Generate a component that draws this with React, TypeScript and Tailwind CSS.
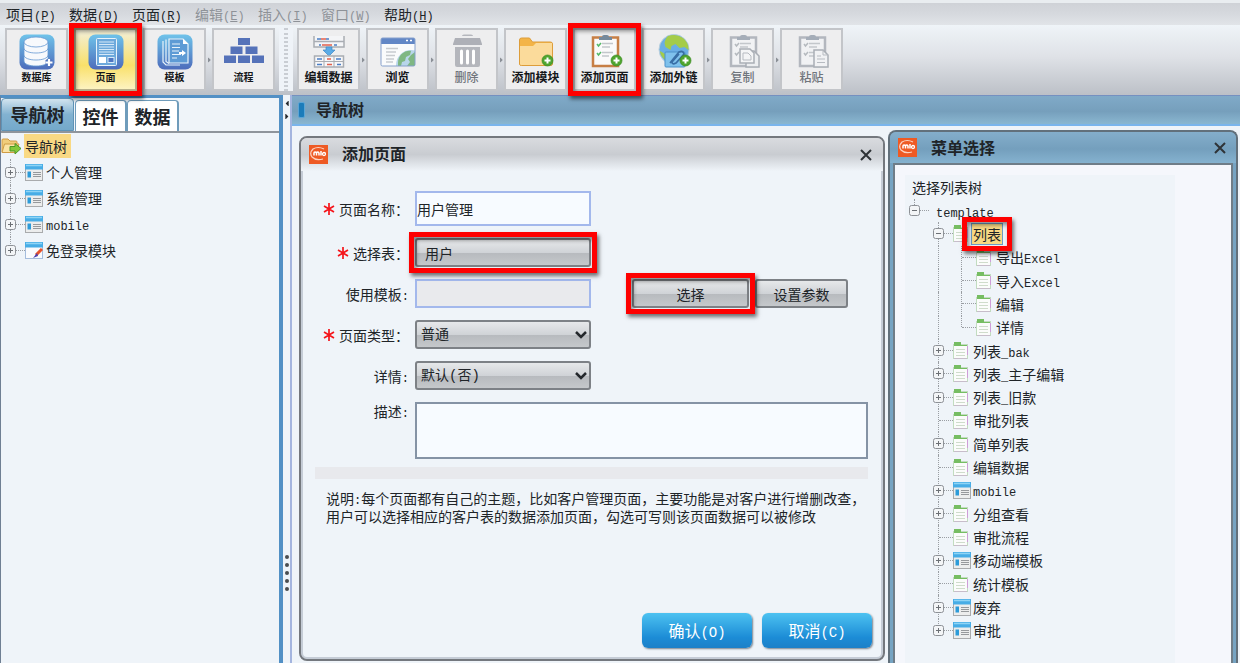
import { Fragment } from "react";
import type { ReactNode } from "react";
import { FaCaretLeft, FaCaretRight } from "react-icons/fa";

const cjk = "font-['Noto_Sans_CJK_SC',sans-serif]";

// Latin runs use a narrower mono face than the Chinese text
function Mixed({ text, latin = "text-[12px]" }: { text: string; latin?: string }) {
    return (
        <>
            {text.split(/([\x21-\x7e]+)/).map((part, i) =>
                i % 2 ? (
                    <span key={i} className={`font-['Liberation_Mono',monospace] leading-none ${latin}`}>{part}</span>
                ) : (
                    <Fragment key={i}>{part}</Fragment>
                )
            )}
        </>
    );
}

function RedFrame({ inset = "-inset-[5px]" }: { inset?: string }) {
    return (
        <span
            className={`absolute ${inset} z-10 border-[5px] border-[#fe0000] pointer-events-none shadow-[2px_3px_4px_rgba(0,0,0,0.55),inset_2px_3px_4px_rgba(0,0,0,0.45)]`}
        />
    );
}

/* ---------- toolbar icons ---------- */

function BlueTile({ children }: { children: ReactNode }) {
    return (
        <svg viewBox="0 0 36 36" className="w-9 h-9">
            <defs>
                <linearGradient id="tile" x1="0" y1="0" x2="0" y2="1">
                    <stop offset="0" stopColor="#6fc3ea" />
                    <stop offset="1" stopColor="#4d6cbb" />
                </linearGradient>
            </defs>
            <rect x="0.5" y="0.5" width="35" height="35" rx="7" fill="url(#tile)" />
            {children}
        </svg>
    );
}

function DatabaseIcon() {
    return (
        <BlueTile>
            <g fill="#f7f9fc" stroke="#6397d2" strokeWidth="0.8">
                <path d="M5 22v5c0 3 5 5 12 5s12-2 12-5v-5z" />
                <path d="M5 15v6c0 3 5 5 12 5s12-2 12-5v-6z" />
                <path d="M5 8v6c0 3 5 5 12 5s12-2 12-5V8z" />
                <ellipse cx="17" cy="8" rx="12" ry="5" />
            </g>
            <path d="M30 25v7M26.500 28.500h7" stroke="#4f72be" strokeWidth="5" />
            <path d="M30 25v7M26.500 28.500h7" stroke="#fff" strokeWidth="2.200" />
        </BlueTile>
    );
}

function PageIcon() {
    return (
        <BlueTile>
            <rect x="8.500" y="4.500" width="20" height="27" rx="1" fill="#6da9dc" stroke="#e8f3fb" />
            <path d="M11 8h15M11 10.500h15M11 13h15M11 15.500h15M11 18h15M11 20.500h15" stroke="#d6e9f8" strokeWidth="1.200" />
            <rect x="11" y="23" width="7" height="6" fill="#fff" />
            <rect x="20" y="23.500" width="6" height="5" fill="#4f77c2" stroke="#d6e9f8" />
        </BlueTile>
    );
}

function TemplateIcon() {
    return (
        <BlueTile>
            <path d="M6 7v21l3 3h14" fill="none" stroke="#e8f3fb" strokeWidth="1.200" />
            <path d="M9 5.500v22l3 2" fill="none" stroke="#e8f3fb" strokeWidth="1.200" />
            <path d="M12 5h14l5 5v19H12z" fill="#5e9bd5" stroke="#e8f3fb" strokeWidth="1.200" />
            <path d="M26 5v5h5z" fill="#fff" />
            <path d="M15 10h8M15 13.500h8M15 17h7M15 20.500h9M15 24h5" stroke="#e8f3fb" strokeWidth="1.100" />
            <path d="M22 18h3v-2l4 3-4 3v-2h-3z" fill="#fff" />
        </BlueTile>
    );
}

function FlowIcon() {
    return (
        <svg viewBox="0 0 42 36" className="w-[42px] h-9" fill="#5572b9">
            <rect x="15" y="4" width="12" height="7" />
            <rect x="7.500" y="12.500" width="12" height="7.500" />
            <rect x="22.500" y="12.500" width="12" height="7.500" />
            <rect x="1" y="21.500" width="12" height="7.500" />
            <rect x="15" y="21.500" width="12" height="7.500" />
            <rect x="29" y="21.500" width="12" height="7.500" />
        </svg>
    );
}

function EditDataIcon() {
    return (
        <svg viewBox="0 0 36 36" className="w-9 h-9">
            <path d="M3 2v11h30V2M3 7.500h30" fill="#f4f5f7" stroke="#a9adb3" strokeWidth="1.500" />
            <path d="M6 5h4M15 5h3M8 11h2M23 11h3" stroke="#4b7fc6" strokeWidth="1.500" />
            <path d="M10 5h5M11 11h10" stroke="#e2604c" strokeWidth="1.500" />
            <path d="M15 13h6v3h3l-6 6-6-6h3z" fill="#5babe6" stroke="#3f87c5" strokeWidth="0.700" />
            <rect x="3.500" y="22" width="29" height="11" fill="#f7f7f9" stroke="#a9adb3" strokeWidth="1.500" />
            <path d="M3 27.500h30M13 22v11M23 22v11" stroke="#a9adb3" />
            <path d="M6 25h5M25 25h5M6 30.500h5M26 30.500h4" stroke="#4b7fc6" strokeWidth="1.500" />
            <path d="M16 25h4M16 30.500h5" stroke="#e2604c" strokeWidth="1.700" />
        </svg>
    );
}

function BrowseIcon() {
    return (
        <svg viewBox="0 0 36 36" className="w-9 h-9">
            <defs>
                <clipPath id="browse"><rect x="1" y="4" width="34" height="28" rx="1.500" /></clipPath>
            </defs>
            <g clipPath="url(#browse)">
                <rect x="1" y="4" width="34" height="28" fill="#fafbfc" />
                <rect x="1" y="4" width="34" height="6" fill="#6287c6" />
                <path d="M26 6.500h2M30 6.500h2" stroke="#fff" strokeWidth="1.500" />
                <path d="M6 14.500h12M6 18h10M6 21.500h9M6 25h8M6 28h7" stroke="#c8cbcf" strokeWidth="1.500" />
                <circle cx="31" cy="31" r="15" fill="#b8d6ea" />
                <path d="M18 29c0-8 7-13 13-12l-1 4-4 2-1 4-3 1-1 4h-3z" fill="#7fb783" />
                <path d="M31 21l4-3v14h-8l3-4-2-3z" fill="#7fb783" />
            </g>
            <rect x="1" y="4" width="34" height="28" rx="1.500" fill="none" stroke="#86a0cc" />
        </svg>
    );
}

function TrashIcon() {
    return (
        <svg viewBox="0 0 36 36" className="w-9 h-9">
            <path d="M13 2q0-1.500 2-1.500h7q2 0 2 1.500z" fill="#b5b7bd" />
            <path d="M6 4h25l2 6v1H4v-1z" fill="#aeb0b7" />
            <path d="M6 13h25v18q0 2-2 2H8q-2 0-2-2z" fill="#b4b6bc" />
            <path d="M12.500 17v12M18.500 17v12M24.500 17v12" stroke="#fff" strokeWidth="3" strokeLinecap="round" />
        </svg>
    );
}

function PlusBadge() {
    return (
        <g>
            <circle cx="29.500" cy="26.500" r="5.500" fill="#4fa52e" stroke="#3c8a22" strokeWidth="0.700" />
            <path d="M29.500 23.500v6M26.500 26.500h6" stroke="#fff" strokeWidth="2" />
        </g>
    );
}

function FolderIcon() {
    return (
        <svg viewBox="0 0 36 36" className="w-9 h-9">
            <path d="M1.500 30V6q0-2 2-2h8l3 4h18q2 0 2 2v20q0 1.500-2 1.500h-29q-2 0-2-1.500z" fill="#f3b447" stroke="#dd9d3a" />
            <path d="M2 12h13l3-3h16v21q0 1-1.500 1h-29Q2 31 2 30z" fill="#fbdb9b" />
            <PlusBadge />
        </svg>
    );
}

function Clipboard({ gray = false }: { gray?: boolean }) {
    return (
        <g>
            <rect x="6" y="3.500" width="25" height="28.500" fill={gray ? "#f1f2f4" : "#fafafa"} stroke={gray ? "#b3b7be" : "#c77f45"} strokeWidth="2.500" />
            <path d="M12 6V3h3q0-2 2-2h3q2 0 2 2h3v3z" fill={gray ? "#a5adb8" : "#76899b"} />
            <path d="M15 9.500h11M15 13h8M15 18.500h11M15 22h7" stroke="#c3c7cb" strokeWidth="1.500" />
            <path d="M10 10l1.500 2 2.500-3M10 19l1.500 2 2.500-3" fill="none" stroke={gray ? "#b5babf" : "#55ba68"} strokeWidth="1.500" />
        </g>
    );
}

function AddPageIcon() {
    return (
        <svg viewBox="0 0 36 36" className="w-9 h-9">
            <Clipboard />
            <PlusBadge />
        </svg>
    );
}

function GlobeIcon() {
    return (
        <svg viewBox="0 0 36 36" className="w-9 h-9">
            <circle cx="18" cy="15.500" r="15" fill="#6aaee5" stroke="#b9cfdd" />
            <path d="M12 2q8-3 15 2 6 5 5.500 12l-4-3-5 1-4-4-4 2-1 4-5-3-1-4q1-5 3.500-7z" fill="#a4cc49" />
            <path d="M4 17l5 3 2 7-3-2q-4-4-4-8z" fill="#a4cc49" />
            <rect x="9" y="18" width="20" height="15" rx="1" fill="#7fc1ec" stroke="#4d91c9" />
            <path d="M14 29l9-11q4-2 5 2l-8 9q-4 2-4-1l7-8" fill="none" stroke="#386ea5" strokeWidth="1.700" />
            <PlusBadge />
        </svg>
    );
}

function CopyIcon() {
    return (
        <svg viewBox="0 0 36 36" className="w-9 h-9">
            <Clipboard gray />
            <path d="M21 17h8l5 5v11H21z" fill="#eceef0" stroke="#a9aeb5" strokeWidth="1.500" />
            <path d="M15 15h10l4 4v10H15z" fill="#f4f5f6" stroke="#a9aeb5" strokeWidth="1.500" />
            <path d="M18 19h5l3 3v4h-8z" fill="none" stroke="#b7bbc1" />
        </svg>
    );
}

function PasteIcon() {
    return (
        <svg viewBox="0 0 36 36" className="w-9 h-9">
            <Clipboard gray />
            <path d="M20 16h9l5 5v12H20z" fill="#f1f2f4" stroke="#a9aeb5" strokeWidth="1.500" />
            <path d="M29 16v5h5M23 22h4M23 25h8M23 28.500h8" fill="none" stroke="#b7bbc1" />
        </svg>
    );
}

/* ---------- tree icons ---------- */

function WindowIcon() {
    return (
        <svg viewBox="0 0 18 17" className="w-[18px] h-[17px] shrink-0">
            <rect x="0.500" y="0.500" width="17" height="16" fill="#eceded" stroke="#a9abad" />
            <rect width="18" height="5.500" fill="#48ade6" />
            <path d="M1 1.500h16" stroke="#8fd4f5" strokeWidth="1.500" />
            <rect x="2.500" y="7.500" width="3.500" height="6" fill="#2c9bd9" />
            <path d="M8 8.500h8M8 10.500h8M8 12.500h8" stroke="#96999c" />
        </svg>
    );
}

function WindowPenIcon() {
    return (
        <svg viewBox="0 0 18 17" className="w-[18px] h-[17px] shrink-0">
            <rect x="0.500" y="0.500" width="17" height="16" fill="#fafbfd" stroke="#a5bddd" />
            <rect width="18" height="5.500" fill="#48ade6" />
            <path d="M1 1.500h16" stroke="#8fd4f5" strokeWidth="1.500" />
            <path d="M17 7l-6 6" stroke="#e8532b" strokeWidth="3" />
            <path d="M12 11l-4 5 5-2z" fill="#4b3fae" />
        </svg>
    );
}

function SheetIcon() {
    return (
        <span className="w-[18px] shrink-0">
            <svg viewBox="0 0 15 17" className="block w-[15px] h-[17px]">
                <rect x="0.500" y="2.500" width="14" height="14" fill="#fbfcfb" stroke="#c2dcc0" />
                <path d="M14.500 4v9" stroke="#cf9ed8" />
                <path d="M1 0h7v3h6v1H1z" fill="#76bd62" />
                <path d="M3 7.500h9M3 10.500h9M3 13.500h9" stroke="#cfdccb" />
                <path d="M1 16.500h13" stroke="#c7bdca" />
            </svg>
        </span>
    );
}

function FolderGoIcon() {
    return (
        <svg viewBox="0 0 20 18" className="w-5 h-[18px] shrink-0">
            <path d="M1 15V3q0-1 1-1h5l2 2h6q1 0 1 1v3" fill="#f0cd7c" stroke="#cf9c45" />
            <path d="M1 15.500L3.500 7H18l-3 8.500z" fill="#fae3a5" stroke="#cf9c45" />
            <path d="M9 9.500h5V6.500l6 5-6 5.500v-3H9z" fill="#84c83b" stroke="#4c9726" />
        </svg>
    );
}

function MioLogo() {
    return (
        <svg viewBox="0 0 19 19" className="w-[19px] h-[19px]">
            <rect width="19" height="19" fill="#ee5a24" />
            <path d="M15 4Q9 1 4 4 0 8 3 12q4 4 11 2" fill="none" stroke="#fbd3c2" strokeWidth="1.200" />
            <path d="M5 10.500V8q0-1 1-1t1.500 1v2.500V8q0-1 1-1t1.500 1v2.500M12 6v4.500" fill="none" stroke="#fff" strokeWidth="1.500" />
            <circle cx="15" cy="9" r="1.500" fill="none" stroke="#fff" strokeWidth="1.300" />
        </svg>
    );
}

/* ---------- menu and toolbar ---------- */

const menus = [
    { text: "项目", hot: "P" },
    { text: "数据", hot: "D" },
    { text: "页面", hot: "R" },
    { text: "编辑", hot: "E", off: true },
    { text: "插入", hot: "I", off: true },
    { text: "窗口", hot: "W", off: true },
    { text: "帮助", hot: "H" },
];

type Tool = { text: string; icon: ReactNode; active?: boolean; framed?: boolean; off?: boolean };

const viewTools: Tool[] = [
    { text: "数据库", icon: <DatabaseIcon /> },
    { text: "页面", icon: <PageIcon />, active: true, framed: true },
    { text: "模板", icon: <TemplateIcon /> },
    { text: "流程", icon: <FlowIcon /> },
];

const actionTools: Tool[] = [
    { text: "编辑数据", icon: <EditDataIcon /> },
    { text: "浏览", icon: <BrowseIcon /> },
    { text: "删除", icon: <TrashIcon />, off: true },
    { text: "添加模块", icon: <FolderIcon /> },
    { text: "添加页面", icon: <AddPageIcon />, framed: true },
    { text: "添加外链", icon: <GlobeIcon /> },
    { text: "复制", icon: <CopyIcon />, off: true },
    { text: "粘贴", icon: <PasteIcon />, off: true },
];

function ToolGroup({ tools, label }: { tools: Tool[]; label: string }) {
    return (
        <div className="flex">
            {tools.map((t, i) => (
                <Fragment key={t.text}>
                    {i > 0 && (
                        <span className="w-[6px] h-[63px] flex items-center justify-center text-[#8b9097]">
                            <FaCaretRight className="w-[5px] h-2" />
                        </span>
                    )}
                    <button
                        disabled={t.off}
                        className={`relative flex flex-col items-center w-[63px] h-[63px] pt-1 border-2 ${
                            t.active
                                ? "border-[#b9b08a] bg-[linear-gradient(#f3efd8,#f9e06a_60%,#fdf3c0)]"
                                : "border-[#c3c5c9] bg-[#eeeeef]"
                        }`}
                    >
                        {t.icon}
                        <span className={`${label} leading-[14px] whitespace-nowrap ${t.off ? "text-[#70757c] font-medium" : "text-[#15171a] font-bold"}`}>
                            {t.text}
                        </span>
                        {t.framed && <RedFrame inset="-inset-[7px]" />}
                    </button>
                </Fragment>
            ))}
        </div>
    );
}

/* ---------- trees ---------- */

function Toggle({ open }: { open?: boolean }) {
    return (
        <button aria-label={open ? "收起" : "展开"} className="relative w-[11px] h-[11px] shrink-0">
            <svg viewBox="0 0 11 11" className="w-[11px] h-[11px]">
                <rect x="0.500" y="0.500" width="10" height="10" rx="2" fill="#f3f5f7" stroke="#8d9196" />
                <path d={open ? "M3 5.500h5" : "M3 5.500h5M5.500 3v5"} stroke="#6c7075" />
            </svg>
        </button>
    );
}

// Dotted guide, optionally with the expand box, then a short line to the icon
function Branch({ toggle, last, first }: { toggle?: "open" | "closed"; last?: boolean; first?: boolean }) {
    return (
        <span className="flex items-center self-stretch shrink-0">
            <span className="relative flex items-center justify-center w-[11px] self-stretch">
                <span className={`absolute left-[5px] top-0 border-l border-dotted border-[#9a9ea3] ${last || first ? "bottom-1/2" : "bottom-0"}`} />
                {toggle && <Toggle open={toggle === "open"} />}
            </span>
            <span className={`border-t border-dotted border-[#9a9ea3] ${toggle ? "w-[9px]" : "w-[14px] -ml-[5px]"}`} />
        </span>
    );
}

const navNodes = [
    { text: "个人管理", icon: <WindowIcon /> },
    { text: "系统管理", icon: <WindowIcon /> },
    { text: "mobile", icon: <WindowIcon /> },
    { text: "免登录模块", icon: <WindowPenIcon /> },
];

type Node = { text: string; level: number; kind?: "sheet" | "window"; toggle?: "open" | "closed"; last?: boolean; picked?: boolean };

const templateNodes: Node[] = [
    { text: "template", level: 0, toggle: "open" },
    { text: "列表", level: 1, kind: "sheet", toggle: "open", picked: true },
    { text: "导出Excel", level: 2, kind: "sheet" },
    { text: "导入Excel", level: 2, kind: "sheet" },
    { text: "编辑", level: 2, kind: "sheet" },
    { text: "详情", level: 2, kind: "sheet", last: true },
    { text: "列表_bak", level: 1, kind: "sheet", toggle: "closed" },
    { text: "列表_主子编辑", level: 1, kind: "sheet", toggle: "closed" },
    { text: "列表_旧款", level: 1, kind: "sheet", toggle: "closed" },
    { text: "审批列表", level: 1, kind: "sheet" },
    { text: "简单列表", level: 1, kind: "sheet", toggle: "closed" },
    { text: "编辑数据", level: 1, kind: "sheet" },
    { text: "mobile", level: 1, kind: "window", toggle: "closed" },
    { text: "分组查看", level: 1, kind: "sheet", toggle: "closed" },
    { text: "审批流程", level: 1, kind: "sheet" },
    { text: "移动端模板", level: 1, kind: "window", toggle: "closed" },
    { text: "统计模板", level: 1, kind: "sheet" },
    { text: "废弃", level: 1, kind: "window", toggle: "closed" },
    { text: "审批", level: 1, kind: "window", toggle: "closed", last: true },
];

function NavPanel() {
    return (
        <aside className="flex flex-col w-[283px] shrink-0 border-t-[3px] border-r-4 border-l border-[#5290c5] border-l-[#6f7f93]">
            <div className="flex items-end h-[35px] border-b-2 border-[#8f959c] text-[18px] font-bold leading-6">
                <button className="w-[73px] h-[33px] pb-[2px] rounded-t-[4px] border border-[#5f93b6] bg-[linear-gradient(#d2e4ef,#82b2d1_50%,#74a9ca)]">导航树</button>
                <button className="w-[52px] h-[31px] ml-px rounded-t-[4px] border border-b-0 border-r-2 border-[#6f9cbb] bg-white">控件</button>
                <button className="w-[52px] h-[31px] rounded-t-[4px] border border-b-0 border-r-2 border-[#6f9cbb] bg-white">数据</button>
            </div>
            <ul className="text-[14px] leading-5">
                <li className="flex items-center h-[26px] gap-[3px]">
                    <FolderGoIcon />
                    <span className="bg-[#f9d984] h-6 px-px pr-1 leading-6">导航树</span>
                </li>
                {navNodes.map((n, i) => (
                    <li key={n.text} className="flex items-center h-[26px] pl-1">
                        <Branch toggle="closed" last={i === navNodes.length - 1} />
                        {n.icon}
                        <span className="pl-[3px]"><Mixed text={n.text} /></span>
                    </li>
                ))}
            </ul>
        </aside>
    );
}

function Splitter() {
    return (
        <div className="flex flex-col items-center justify-between w-[9px] shrink-0 border-r-2 border-[#a4b5df] pt-1 pb-[72px] text-[#26292d]">
            <div className="flex flex-col gap-1">
                <FaCaretLeft className="w-2 h-[9px]" />
                <FaCaretRight className="w-2 h-[9px]" />
            </div>
            <div className="flex flex-col gap-1">
                {[0, 1, 2, 3, 4].map((i) => (
                    <span key={i} className="w-1 h-1 rounded-full bg-[#4a4d50]" />
                ))}
            </div>
        </div>
    );
}

function CloseButton() {
    return (
        <button aria-label="关闭" className="ml-auto">
            <svg viewBox="0 0 12 12" className="w-3 h-3">
                <path d="M1 1l10 10M11 1L1 11" stroke="#2f3337" strokeWidth="2" />
            </svg>
        </button>
    );
}

const metal = "border-2 border-[#7d8186] rounded-[3px] bg-[linear-gradient(#e6e8ea,#d0d3d7_50%,#b7babe_52%,#c5c8cb)]";

function FieldLabel({ id, text, required }: { id: string; text: string; required?: boolean }) {
    return (
        <label htmlFor={id} className="flex items-center justify-end gap-1 whitespace-nowrap">
            {required && (
                <svg viewBox="0 0 12 12" className="w-3 h-3">
                    <path d="M6 0v12M1 3l10 6M11 3L1 9" stroke="#f5141a" strokeWidth="1.700" />
                </svg>
            )}
            <span><Mixed text={text} /></span>
        </label>
    );
}

function SelectBox({ id, value }: { id: string; value: string }) {
    return (
        <div className="relative w-[176px]">
            <select id={id} className={`appearance-none w-full h-[29px] pl-1 font-['Liberation_Mono','Noto_Sans_CJK_SC',monospace] ${metal}`}>
                <option>{value}</option>
            </select>
            <svg viewBox="0 0 12 8" className="absolute right-1 top-[11px] w-3 h-2 pointer-events-none">
                <path d="M1 1l5 5 5-5" fill="none" stroke="#24282c" strokeWidth="2.500" />
            </svg>
        </div>
    );
}

function AddPageDialog() {
    return (
        <section className="flex flex-col flex-1 min-w-0 mt-[10px] mb-[2px] border-2 border-[#74787e] rounded-lg bg-[#eff4f9] shadow-[inset_0_0_0_2px_#c5ccd6]">
            <header className="flex items-center h-[33px] pl-2 pr-[11px] rounded-t-md bg-[linear-gradient(#d9dbdf,#c9ccd1_50%,#eff4f9)]">
                <MioLogo />
                <h2 className="ml-[14px] pb-1 text-[16px] leading-6 font-bold">添加页面</h2>
                <CloseButton />
            </header>
            <form className="grid grid-cols-[94px_1fr] gap-x-[6px] gap-y-3 items-center pt-5 pl-[14px] pr-[15px] text-[14px] leading-[18px]">
                <FieldLabel id="name" text="页面名称：" required />
                <input id="name" defaultValue="用户管理" className="w-[176px] h-[35px] border-2 border-[#a3b8ec] bg-[#f7fbff]" />

                <FieldLabel id="table" text="选择表：" required />
                <button id="table" type="button" className={`relative w-[176px] h-[29px] pl-2 text-left ${metal}`}>
                    用户
                    <RedFrame inset="-inset-[8px]" />
                </button>

                <FieldLabel id="template" text="使用模板:" />
                <div className="flex items-center">
                    <input id="template" readOnly className="w-[176px] h-[29px] border-2 border-[#a3b8ec] bg-[#e9eaed]" />
                    <button type="button" className={`relative ml-[41px] w-[117px] h-[29px] ${metal}`}>
                        选择
                        <RedFrame inset="-inset-[8px]" />
                    </button>
                    <button type="button" className={`ml-[6px] w-[93px] h-[29px] ${metal}`}>设置参数</button>
                </div>

                <FieldLabel id="type" text="页面类型：" required />
                <SelectBox id="type" value="普通" />

                <FieldLabel id="detail" text="详情:" />
                <SelectBox id="detail" value="默认(否)" />

                <div className="self-start"><FieldLabel id="desc" text="描述:" /></div>
                <textarea id="desc" className="block h-[57px] resize-none border-2 border-[#8593a5] bg-[#f7fbff]" />
            </form>
            <div className="h-3 mt-2 ml-[14px] mr-[15px] bg-[#e8e9ed]" />
            <p className="mt-[10px] ml-[25px] text-[14px] leading-[18px] whitespace-nowrap">
                <Mixed text="说明:每个页面都有自己的主题，比如客户管理页面，主要功能是对客户进行增删改查，" />
                <br />
                用户可以选择相应的客户表的数据添加页面，勾选可写则该页面数据可以被修改
            </p>
            <footer className="flex justify-end gap-[10px] mt-auto pr-[11px] pb-[11px] text-[16px] text-white">
                {["确认(O)", "取消(C)"].map((t) => (
                    <button key={t} className="w-[110px] h-[35px] pb-[2px] rounded-[6px] bg-[linear-gradient(#4dc2f1,#1c8cd6_70%,#1c80c8)] shadow-[1px_1px_2px_#76818c]">
                        <Mixed text={t} latin="text-[14px]" />
                    </button>
                ))}
            </footer>
        </section>
    );
}

function MenuPickDialog() {
    return (
        <section className="flex flex-col w-[350px] shrink-0 mt-1 border-2 border-b-0 border-[#62707b] rounded-t-lg bg-[#76a4c3]">
            <header className="flex items-center h-[31px] pl-2 pr-[10px] rounded-t-md bg-[linear-gradient(#84aecb,#749fbd_55%,#85b2cf)]">
                <MioLogo />
                <h2 className="ml-[14px] pb-[2px] text-[16px] leading-6 font-bold">菜单选择</h2>
                <CloseButton />
            </header>
            <div className="flex-1 mx-[3px] border-2 border-b-0 border-[#6f7d88] bg-[#f5f7fc] pt-[10px] pl-[10px]">
                <div className="w-[270px] h-full bg-[#eff4f9] text-[14px]">
                    <p className="pl-[7px] leading-6">选择列表树</p>
                    <ul className="grid auto-rows-fr h-[443px] leading-5">
                        {templateNodes.map((n, i) => (
                            <li key={i} className={`flex items-center ${n.level === 0 ? "pl-1" : "pl-7"}`}>
                                {n.level === 2 && (
                                    <span className="self-stretch w-[18px] ml-[5px] border-l border-dotted border-[#9a9ea3]" />
                                )}
                                <Branch toggle={n.toggle} last={n.last} first={n.level === 0} />
                                {n.kind === "sheet" && <SheetIcon />}
                                {n.kind === "window" && <WindowIcon />}
                                {n.picked ? (
                                    <span className="relative px-px border border-[#6c9cc4] bg-[#f9d984]">
                                        {n.text}
                                        <RedFrame inset="-inset-y-[7px] -left-[10px] -right-[10px]" />
                                    </span>
                                ) : (
                                    <span className={n.kind ? "pl-[2px]" : "pl-[7px]"}><Mixed text={n.text} /></span>
                                )}
                            </li>
                        ))}
                    </ul>
                </div>
            </div>
        </section>
    );
}

export default function App() {
    return (
        <div className={`flex flex-col h-screen overflow-hidden bg-[#eff4f9] text-[#202428] ${cjk}`}>
            <nav className="flex items-center gap-[14px] h-[25px] shrink-0 pl-[6px] border-t-[3px] border-[#e9edf0] bg-[linear-gradient(#cfd2d7,#d6d9de_50%,#e1e4e8)] text-[14px] leading-5">
                {menus.map((m) => (
                    <button key={m.hot} disabled={m.off} className={`w-[49px] text-left whitespace-nowrap ${m.off ? "text-[#8e9298]" : ""}`}>
                        {m.text}
                        <span className="font-['Liberation_Mono',monospace] text-[12px] leading-none">(<u>{m.hot}</u>)</span>
                    </button>
                ))}
            </nav>
            <div className="flex h-[70px] shrink-0 pt-[3px] pl-[5px] bg-[linear-gradient(#eff4f8,#dfe2e7_45%,#bcc0c7)]">
                <ToolGroup tools={viewTools} label="text-[10px]" />
                <div className="flex justify-center w-[22px] h-[63px]">
                    <div className="flex justify-center w-[14px] bg-[#eff3f8]">
                        <span className="w-1 border-x-2 border-dotted border-[#c9cdd3]" />
                    </div>
                </div>
                <ToolGroup tools={actionTools} label="text-[12px]" />
            </div>
            <div className="flex flex-1 min-h-0">
                <NavPanel />
                <Splitter />
                <main className="flex flex-col flex-1 min-w-0">
                    <div className="flex items-center h-[31px] shrink-0 pl-[6px] border-t border-b-2 border-t-[#7590c0] border-b-[#7ab5ec] bg-[linear-gradient(#80aac8,#769fbc_55%,#8ab7d1)]">
                        <span className="w-[7px] h-4 rounded-[2px] border border-[#5aa5d6] bg-[#1c7cba]" />
                        <h1 className="ml-[11px] pb-[2px] text-[16px] font-bold leading-6">导航树</h1>
                    </div>
                    <div className="flex flex-1 min-h-0 gap-[3px] pl-[7px] pr-[2px]">
                        <AddPageDialog />
                        <MenuPickDialog />
                    </div>
                </main>
            </div>
        </div>
    );
}
